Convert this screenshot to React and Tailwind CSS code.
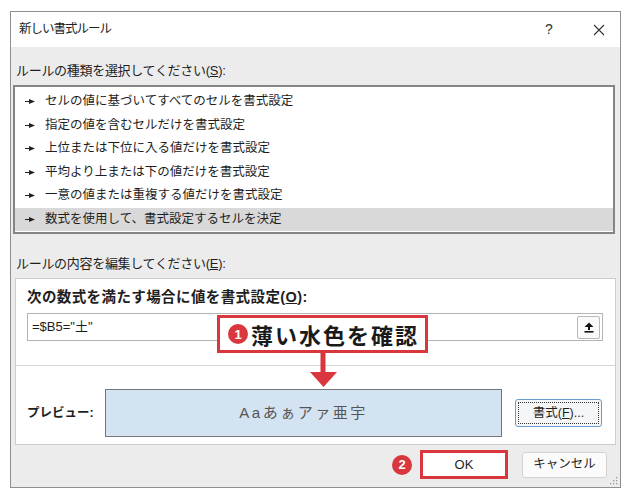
import React from 'react';

const rules = [
  'セルの値に基づいてすべてのセルを書式設定',
  '指定の値を含むセルだけを書式設定',
  '上位または下位に入る値だけを書式設定',
  '平均より上または下の値だけを書式設定',
  '一意の値または重複する値だけを書式設定',
  '数式を使用して、書式設定するセルを決定',
];

const Pointer = () => (
  <svg width="10" height="7" viewBox="0 0 10 7" className="shrink-0">
    <path d="M0 3.5h5" stroke="#222" strokeWidth="1" />
    <polygon points="4,1 10,3.5 4,6" fill="#222" />
  </svg>
);

const Badge = ({ n }) => (
  <span className="w-[20px] h-[20px] rounded-full bg-[#d9363e] text-white text-[13px] font-bold leading-none flex items-center justify-center shrink-0">
    {n}
  </span>
);

const App = () => {
  return (
    <div className="relative w-[638px] h-[501px] bg-white pt-[11px] pl-[10px] font-['Liberation_Sans','Noto_Sans_CJK_JP',sans-serif] text-[#1e1e1e]">
      {/* Dialog */}
      <div className="relative w-[611px] h-[477px] border border-[#8f8f8f] bg-[#ececec] flex flex-col">
        {/* Title bar */}
        <div className="h-[35px] bg-white flex items-center pl-[8px] shrink-0">
          <span className="text-[12.5px] tracking-[-1px] text-[#222]">新しい書式ルール</span>
          <span className="ml-auto w-[20px] text-center text-[14px] text-[#333]">?</span>
          <span className="ml-[33px] mr-[14px] w-[14px] flex items-center justify-center">
            <svg width="12" height="12" viewBox="0 0 12 12">
              <path d="M1 1L11 11M11 1L1 11" stroke="#333" strokeWidth="1.1" />
            </svg>
          </span>
        </div>

        {/* Rule type */}
        <div className="mt-[15px] pl-[5px] h-[18px] leading-[18px] text-[13px] tracking-[-0.3px]">
          ルールの種類を選択してください(<span className="underline">S</span>):
        </div>
        <div className="mt-[5px] ml-[2px] w-[602px] h-[149px] border-2 border-[#858585] bg-white pt-[3px] shrink-0">
          {rules.map((r, i) => (
            <div
              key={r}
              className={`h-[23.5px] flex items-center pl-[10px] gap-[10px] text-[12.5px] ${i === 5 ? 'bg-[#d9d9d9]' : ''}`}
            >
              <Pointer />
              <span>{r}</span>
            </div>
          ))}
        </div>

        {/* Edit rule */}
        <div className="mt-[21px] pl-[5px] h-[18px] leading-[18px] text-[13px] tracking-[-0.3px]">
          ルールの内容を編集してください(<span className="underline">E</span>):
        </div>
        <div className="mt-[5px] ml-[4px] w-[601px] h-[167px] border border-[#cdcdcd] bg-white flex flex-col shrink-0">
          <div className="mt-[9px] pl-[11px] h-[18px] leading-[18px] text-[14.5px] font-bold tracking-[0.4px]">
            次の数式を満たす場合に値を書式設定(<span className="underline">O</span>):
          </div>
          <div className="mt-[7px] ml-[11px] w-[576px] h-[28px] border border-[#b4b4b4] flex items-center pl-[4px] pr-[2px]">
            <span className="text-[13px]">=$B5="土"</span>
            <span className="ml-auto w-[23px] h-[23px] border border-[#b9b9b9] bg-[#fafafa] rounded-[2px] flex items-center justify-center">
              <svg width="10" height="11" viewBox="0 0 10 11">
                <polygon points="5,0.5 9.5,5 0.5,5" fill="#111" />
                <rect x="4" y="4.5" width="2" height="3.5" fill="#111" />
                <rect x="0.5" y="9" width="9" height="1.6" fill="#111" />
              </svg>
            </span>
          </div>
          <div className="mt-[24px] h-px bg-[#d6d6d6]" />
          <div className="mt-[23px] flex items-center pl-[11px]">
            <span className="w-[78px] text-[12.5px] font-bold">プレビュー:</span>
            <div className="w-[397px] h-[48px] border border-[#767676] bg-[#d3e3f1] flex items-center justify-center">
              <span className="text-[15px] tracking-[2.5px] text-[#555]">Aaあぁアァ亜宇</span>
            </div>
            <div className="ml-[13px] w-[87px] h-[28px] rounded-[3px] border border-[#6b9ed0] bg-[#f4f6f8] p-[2px]">
              <div className="w-full h-full border border-dotted border-[#333] flex items-center justify-center text-[12.5px]">
                書式(<span className="underline">F</span>)...
              </div>
            </div>
          </div>
        </div>

        {/* Buttons */}
        <div className="mt-[5px] flex items-center justify-end pr-[13px]">
          <Badge n="2" />
          <div className="ml-[8px] w-[88px] h-[29px] border-[3px] border-[#d9363e] bg-white flex items-center justify-center text-[13px] font-normal">
            OK
          </div>
          <div className="ml-[14px] w-[85px] h-[26px] rounded-[3px] border border-[#d2d2d2] bg-[#fbfbfb] flex items-center justify-center text-[12.5px]">
            キャンセル
          </div>
        </div>

        {/* resize grip */}
        <svg className="absolute right-[2px] bottom-[2px]" width="8" height="8" viewBox="0 0 8 8">
          <rect x="6" y="0" width="1.3" height="1.3" fill="#9a9a9a" />
          <rect x="3" y="3" width="1.3" height="1.3" fill="#9a9a9a" />
          <rect x="6" y="3" width="1.3" height="1.3" fill="#9a9a9a" />
          <rect x="0" y="6" width="1.3" height="1.3" fill="#9a9a9a" />
          <rect x="3" y="6" width="1.3" height="1.3" fill="#9a9a9a" />
          <rect x="6" y="6" width="1.3" height="1.3" fill="#9a9a9a" />
        </svg>
      </div>

      {/* Callout */}
      <div className="absolute left-[217px] top-[315px] w-[211px] h-[38px] border-[3px] border-[#d9363e] bg-white flex items-center pl-[8px] gap-[3px]">
        <Badge n="1" />
        <span className="text-[22px] leading-none font-bold tracking-[2px] text-[#1a1a1a] font-['Noto_Sans_CJK_JP',sans-serif]">
          薄い水色を確認
        </span>
      </div>
      <svg className="absolute left-[309px] top-[353px]" width="29" height="35" viewBox="0 0 29 35">
        <rect x="11.5" y="0" width="5" height="20" fill="#d9363e" />
        <polygon points="1,19 28,19 14.5,34" fill="#d9363e" />
      </svg>
    </div>
  );
};

export default App;
